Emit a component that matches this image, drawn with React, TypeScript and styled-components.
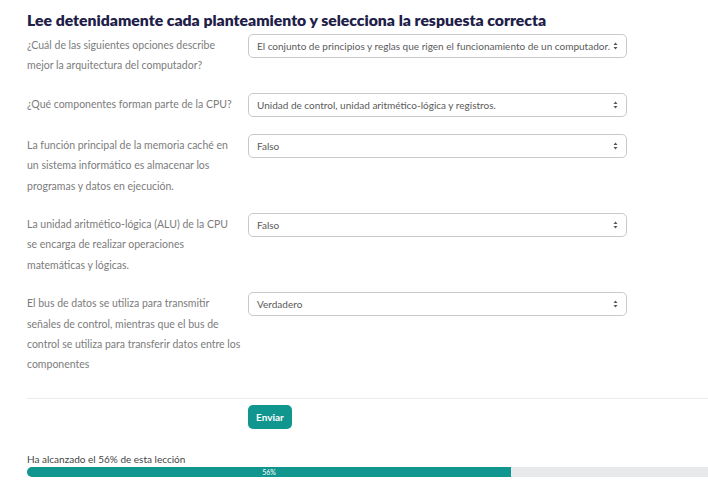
import React from "react";
import styled, { createGlobalStyle } from "styled-components";

const GlobalStyle = createGlobalStyle`
  body {
    margin: 0;
    background: #ffffff;
    font-family: "Lato", "Noto Sans", sans-serif;
  }
`;

const Page = styled.main`
  padding: 10px 0 0 27px;
  width: 681px;
`;

const Title = styled.h2`
  margin: 0 0 4px;
  font-size: 15.75px;
  font-weight: 800;
  color: #1e2048;
  line-height: 20px;
`;

const Row = styled.div`
  display: grid;
  grid-template-columns: 213px 379px;
  column-gap: 8px;
  align-items: start;
  margin-bottom: 17px;
`;

const Label = styled.p`
  margin: 0;
  padding-top: 1px;
  font-size: 10.5px;
  line-height: 20.4px;
  color: #7c7c7c;
  white-space: nowrap;
`;

const SelectBox = styled.div`
  position: relative;
  height: 24px;
  box-sizing: border-box;
  border: 1px solid #c9c9c9;
  border-radius: 5px;
  display: flex;
  align-items: center;
  padding: 0 24px 0 8px;
  font-size: 10px;
  color: #5a5a5a;
  white-space: nowrap;
`;

const Arrows = styled.svg`
  position: absolute;
  right: 8px;
  top: 50%;
  margin-top: -4px;
`;

const Divider = styled.hr`
  margin: 23px 0 6px;
  border: 0;
  border-top: 1px solid #ededed;
`;

const Actions = styled.div`
  padding-left: 221px;
  line-height: 0;
`;

const Button = styled.button`
  height: 24px;
  padding: 0 8px;
  border: 0;
  border-radius: 5px;
  background: #11958f;
  color: #ffffff;
  font-family: inherit;
  font-size: 10px;
  line-height: 24px;
  font-weight: 700;
`;

const ProgressText = styled.div`
  margin-top: 24px;
  font-size: 10px;
  line-height: 12px;
  color: #444;
`;

const Track = styled.div`
  margin-top: 2px;
  height: 10px;
  background: #e8e9eb;
  border-radius: 5px 0 0 5px;
  overflow: hidden;
`;

const Fill = styled.div`
  height: 100%;
  background: #11958f;
  color: #ffffff;
  font-size: 7px;
  line-height: 10px;
  text-align: center;
`;

const questions = [
  {
    label: ["¿Cuál de las siguientes opciones describe", "mejor la arquitectura del computador?"],
    value: "El conjunto de principios y reglas que rigen el funcionamiento de un computador.",
  },
  {
    label: ["¿Qué componentes forman parte de la CPU?"],
    value: "Unidad de control, unidad aritmético-lógica y registros.",
  },
  {
    label: [
      "La función principal de la memoria caché en",
      "un sistema informático es almacenar los",
      "programas y datos en ejecución.",
    ],
    value: "Falso",
  },
  {
    label: [
      "La unidad aritmético-lógica (ALU) de la CPU",
      "se encarga de realizar operaciones",
      "matemáticas y lógicas.",
    ],
    value: "Falso",
  },
  {
    label: [
      "El bus de datos se utiliza para transmitir",
      "señales de control, mientras que el bus de",
      "control se utiliza para transferir datos entre los",
      "componentes",
    ],
    value: "Verdadero",
  },
];

function Select({ value }: { value: string }) {
  return (
    <SelectBox>
      {value}
      <Arrows width="5" height="8" viewBox="0 0 5 8">
        <path d="M2.5 0.5 L4.5 3 H0.5 Z M2.5 7.5 L4.5 5 H0.5 Z" fill="#555" />
      </Arrows>
    </SelectBox>
  );
}

export default function App() {
  const progress = 56;
  return (
    <Page>
      <GlobalStyle />
      <Title>Lee detenidamente cada planteamiento y selecciona la respuesta correcta</Title>
      {questions.map((q, i) => (
        <Row key={i}>
          <Label>
            {q.label.map((line, j) => (
              <React.Fragment key={j}>
                {line}
                {j < q.label.length - 1 && <br />}
              </React.Fragment>
            ))}
          </Label>
          <Select value={q.value} />
        </Row>
      ))}
      <Divider />
      <Actions>
        <Button>Enviar</Button>
      </Actions>
      <ProgressText>Ha alcanzado el {progress}% de esta lección</ProgressText>
      <Track>
        <Fill style={{ width: `${(484 / 681) * 100}%` }}>{progress}%</Fill>
      </Track>
    </Page>
  );
}
